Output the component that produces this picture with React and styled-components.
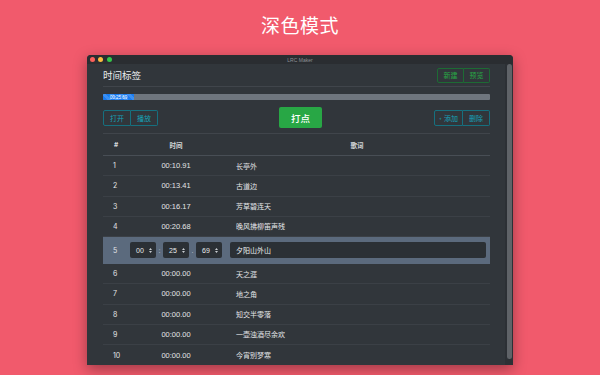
import React from "react";
import styled, { createGlobalStyle } from "styled-components";

const GlobalStyle = createGlobalStyle`
  body {
    margin: 0;
    background: #f15a6c;
    font-family: "Inter", "Noto Sans CJK SC", sans-serif;
  }
`;

const Page = styled.div`
  width: 600px;
  height: 375px;
  overflow: hidden;
`;

const Heading = styled.h1`
  margin: 0;
  padding-top: 12px;
  height: 26px;
  line-height: 26px;
  text-align: center;
  color: #ffffff;
  font-size: 19px;
  font-weight: 400;
  letter-spacing: 0.5px;
  font-family: "Noto Sans CJK SC", sans-serif;
`;

const Window = styled.div`
  width: 426px;
  margin: 17px auto 0;
  background: #31363b;
  border-radius: 4px 4px 0 0;
  overflow: hidden;
  box-shadow: 0 4px 14px rgba(0, 0, 0, 0.35);
`;

const TitleBar = styled.div`
  height: 9px;
  display: grid;
  grid-template-columns: 1fr auto 1fr;
  align-items: center;
  background: #2a2d31;
  padding: 0 2.5px;
`;

const Lights = styled.div`
  display: flex;
  gap: 3.5px;
`;

const Light = styled.span`
  width: 5px;
  height: 5px;
  border-radius: 50%;
  background: ${(p) => p.color};
`;

const WinTitle = styled.span`
  font-size: 5px;
  color: #8d9196;
  font-family: "Liberation Sans", sans-serif;
`;

const Body = styled.div`
  display: flex;
`;

const Content = styled.div`
  flex: 1;
  padding: 0 15px 0 16px;
`;

const ScrollTrack = styled.div`
  width: 8px;
  background: #2c3035;
  padding: 0 1.5px 6px 2px;
  box-sizing: border-box;
  display: flex;
`;

const ScrollThumb = styled.div`
  flex: 1;
  background: #5f6368;
  border-radius: 3px;
`;

const Header = styled.div`
  height: 23px;
  display: flex;
  align-items: center;
  justify-content: space-between;
  border-bottom: 1px solid #40454b;
  box-sizing: border-box;
`;

const HeaderTitle = styled.span`
  font-size: 9.5px;
  color: #eceff1;
`;

const Group = styled.div`
  display: flex;
`;

const OutlineBtn = styled.div`
  height: ${(p) => p.h || 15}px;
  padding: 0 ${(p) => p.px || 5.5}px;
  display: flex;
  align-items: center;
  gap: 2px;
  font-size: 7px;
  color: ${(p) => (p.tone === "green" ? "#28a745" : "#17a2b8")};
  border: 1px solid ${(p) => (p.tone === "green" ? "#1d6b34" : "#16707f")};
  box-sizing: border-box;
  &:first-child {
    border-radius: 2px 0 0 2px;
  }
  &:last-child {
    border-radius: 0 2px 2px 0;
    border-left: none;
  }
`;

const Progress = styled.div`
  margin-top: 7px;
  height: 6px;
  background: #6f767e;
  border-radius: 1px;
  overflow: hidden;
  display: flex;
`;

const ProgressFill = styled.div`
  background: repeating-linear-gradient(
    45deg,
    #1a7cf0 0 3px,
    #3b8ff2 3px 6px
  );
  display: flex;
  align-items: center;
  justify-content: center;
  color: #ffffff;
  font-size: 4.5px;
  font-family: "Liberation Sans", sans-serif;
`;

const Controls = styled.div`
  margin-top: 7px;
  height: 21px;
  padding-bottom: 5px;
  border-bottom: 1px solid #40454b;
  display: grid;
  grid-template-columns: 1fr auto 1fr;
  align-items: center;
`;

const RightSlot = styled.div`
  justify-self: end;
`;

const PunchBtn = styled.div`
  margin-left: 8px;
  width: 43px;
  height: 21px;
  background: #28a745;
  color: #ffffff;
  font-size: 9.5px;
  font-weight: 500;
  border-radius: 2px;
  display: flex;
  align-items: center;
  justify-content: center;
`;

const Row = styled.div`
  display: grid;
  grid-template-columns: 25px 96px 1fr;
  align-items: center;
  height: ${(p) => p.h || 20.25}px;
  box-sizing: border-box;
  border-bottom: ${(p) => (p.last ? "none" : `1px solid ${p.line || "#3b4046"}`)};
  background: ${(p) => p.bg || "transparent"};
  font-size: 7px;
  color: #e3e5e7;
`;

const NumCell = styled.span`
  padding-left: 10px;
  font-size: 7px;
`;

const Th = styled.span`
  font-size: 6.5px;
  font-weight: 700;
  color: #d6d9dc;
  text-align: ${(p) => p.align || "center"};
  padding-left: ${(p) => p.pl || 0}px;
`;

const TimeCell = styled.span`
  text-align: center;
  font-family: "Liberation Sans", sans-serif;
  font-size: 7.5px;
`;

const LyricCell = styled.span`
  padding-left: 12px;
`;

const TimeInputs = styled.div`
  display: flex;
  align-items: center;
  justify-content: center;
  gap: 2px;
`;

const NumInput = styled.div`
  width: 26px;
  height: 16px;
  background: #2b3035;
  border-radius: 2px;
  display: flex;
  align-items: center;
  padding: 0 4px 0 6px;
  box-sizing: border-box;
  justify-content: space-between;
  font-family: "Liberation Sans", sans-serif;
  font-size: 7px;
  color: #e9ebed;
`;

const Sep = styled.span`
  width: 3px;
  text-align: center;
  color: #aeb6bf;
  font-size: 7px;
`;

const TextInput = styled.div`
  margin: 0 4px 0 6px;
  height: 16px;
  background: #2b3035;
  border-radius: 2px;
  display: flex;
  align-items: center;
  padding-left: 6px;
  font-size: 7px;
  color: #eef0f2;
`;

const Spinner = () => (
  <svg width="3" height="5" viewBox="0 0 3 5">
    <path d="M1.5 0 L3 2 H0 Z M1.5 5 L3 3 H0 Z" fill="#c9cdd1" />
  </svg>
);

const rows = [
  ["1", "00:10.91", "长亭外"],
  ["2", "00:13.41", "古道边"],
  ["3", "00:16.17", "芳草碧连天"],
  ["4", "00:20.68", "晚风拂柳笛声残"],
  ["5", "00:25.69", "夕阳山外山"],
  ["6", "00:00.00", "天之涯"],
  ["7", "00:00.00", "地之角"],
  ["8", "00:00.00", "知交半零落"],
  ["9", "00:00.00", "一壶浊酒尽余欢"],
  ["10", "00:00.00", "今宵别梦寒"],
];

export default function App() {
  return (
    <Page>
      <GlobalStyle />
      <Heading>深色模式</Heading>
      <Window>
        <TitleBar>
          <Lights>
            <Light color="#fc605b" />
            <Light color="#fdbc40" />
            <Light color="#34c84a" />
          </Lights>
          <WinTitle>LRC Maker</WinTitle>
          <span />
        </TitleBar>
        <Body>
          <Content>
            <Header>
              <HeaderTitle>时间标签</HeaderTitle>
              <Group>
                <OutlineBtn tone="green">新建</OutlineBtn>
                <OutlineBtn tone="green">预览</OutlineBtn>
              </Group>
            </Header>
            <Progress>
              <ProgressFill style={{ width: "8%" }}>00:25.69</ProgressFill>
            </Progress>
            <Controls>
              <Group>
                <OutlineBtn tone="teal" h={16} px={6}>打开</OutlineBtn>
                <OutlineBtn tone="teal" h={16} px={6}>播放</OutlineBtn>
              </Group>
              <PunchBtn>打点</PunchBtn>
              <RightSlot>
                <Group>
                  <OutlineBtn tone="teal" h={16} px={4}>
                    <span style={{ fontSize: "5px" }}>+</span>添加
                  </OutlineBtn>
                  <OutlineBtn tone="teal" h={16} px={6}>删除</OutlineBtn>
                </Group>
              </RightSlot>
            </Controls>
            <Row h={22} line="#484e55">
              <Th align="left" pl={11}>#</Th>
              <Th>时间</Th>
              <Th>歌词</Th>
            </Row>
            {rows.map(([n, t, l], i) =>
              n === "5" ? (
                <Row key={n} h={27} bg="#5b6a7d" line="#5b6a7d">
                  <NumCell>{n}</NumCell>
                  <TimeInputs>
                    <NumInput>00<Spinner /></NumInput>
                    <Sep>:</Sep>
                    <NumInput>25<Spinner /></NumInput>
                    <Sep>.</Sep>
                    <NumInput>69<Spinner /></NumInput>
                  </TimeInputs>
                  <TextInput>{l}</TextInput>
                </Row>
              ) : (
                <Row key={n} last={i === rows.length - 1}>
                  <NumCell>{n}</NumCell>
                  <TimeCell>{t}</TimeCell>
                  <LyricCell>{l}</LyricCell>
                </Row>
              )
            )}
          </Content>
          <ScrollTrack>
            <ScrollThumb />
          </ScrollTrack>
        </Body>
      </Window>
    </Page>
  );
}
